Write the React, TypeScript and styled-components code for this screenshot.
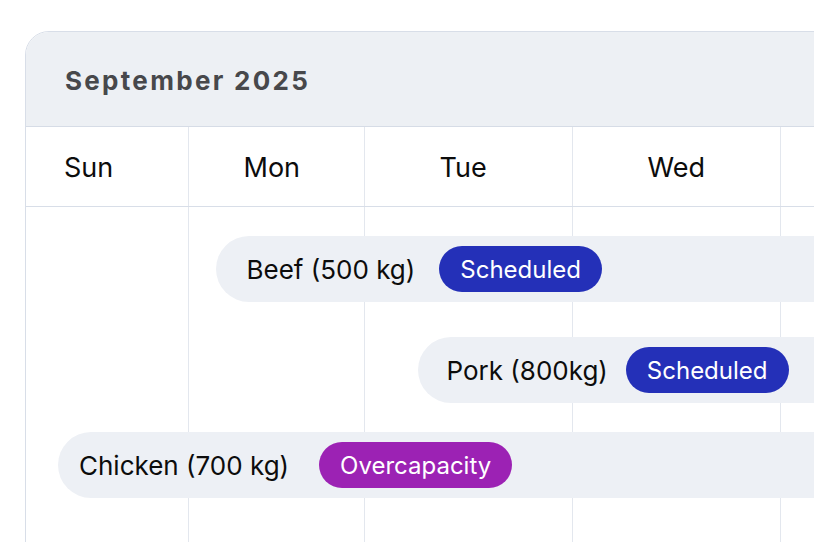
import React from "react";
import styled, { createGlobalStyle } from "styled-components";

const GlobalStyle = createGlobalStyle`
  html, body {
    margin: 0;
    padding: 0;
    background: #ffffff;
    overflow: hidden;
  }
  body {
    font-family: Inter, "Noto Sans", sans-serif;
    color: #111111;
  }
`;

const COLUMNS = "162.5px 176px 208px 208px 208px 208px 208px";

// left padding of each day name inside its column
const days = [
  { name: "Sun", pad: 38 },
  { name: "Mon", pad: 55 },
  { name: "Tue", pad: 75 },
  { name: "Wed", pad: 75 },
  { name: "Thu", pad: 75 },
  { name: "Fri", pad: 75 },
  { name: "Sat", pad: 75 },
];

type Status = "scheduled" | "overcapacity";

const events: {
  label: string;
  status: Status;
  col: number;
  offset: number;
  top: number;
  pad: number;
  gap: number;
}[] = [
  { label: "Beef (500 kg)", status: "scheduled", col: 2, offset: 27, top: 29, pad: 31, gap: 24 },
  { label: "Pork (800kg)", status: "scheduled", col: 3, offset: 53, top: 35, pad: 29, gap: 18 },
  { label: "Chicken (700 kg)", status: "overcapacity", col: 1, offset: 32, top: 29, pad: 21, gap: 30 },
];

export default function App() {
  return (
    <>
      <GlobalStyle />
      <Card>
        <MonthHeader>September 2025</MonthHeader>
        <DayRow>
          {days.map((d, i) => (
            <DayCell key={d.name} $pad={d.pad} $last={i === days.length - 1}>
              {d.name}
            </DayCell>
          ))}
        </DayRow>
        <Body>
          {days.map((d, i) => (
            <ColumnLine key={d.name} $col={i + 1} $last={i === days.length - 1} />
          ))}
          {events.map((e, i) => (
            <EventBar
              key={e.label}
              $col={e.col}
              $row={i + 1}
              $offset={e.offset}
              $top={e.top}
              $pad={e.pad}
              $gap={e.gap}
            >
              <EventLabel>{e.label}</EventLabel>
              <Badge $status={e.status}>
                {e.status === "scheduled" ? "Scheduled" : "Overcapacity"}
              </Badge>
            </EventBar>
          ))}
        </Body>
      </Card>
    </>
  );
}

const Card = styled.div`
  margin: 31px 0 0 25px;
  width: 1400px;
  height: 620px;
  display: flex;
  flex-direction: column;
  border: 1.5px solid #d8dee8;
  border-radius: 24px 24px 0 0;
  overflow: hidden;
  background: #ffffff;
`;

const MonthHeader = styled.div`
  flex: none;
  height: 95px;
  box-sizing: border-box;
  padding: 3px 0 0 39px;
  display: flex;
  align-items: center;
  background: #edf0f4;
  border-bottom: 1.5px solid #d6dce6;
  font-size: 26px;
  font-weight: 700;
  letter-spacing: 2.3px;
  color: #47484b;
`;

const DayRow = styled.div`
  flex: none;
  display: grid;
  grid-template-columns: ${COLUMNS};
  height: 79px;
  border-bottom: 1.5px solid #d8dee8;
`;

const DayCell = styled.div<{ $pad: number; $last: boolean }>`
  display: flex;
  align-items: center;
  padding: 2px 0 0 ${(p) => p.$pad}px;
  border-right: ${(p) => (p.$last ? "none" : "1.5px solid #e3e7ee")};
  font-size: 27px;
  color: #0c0c0c;
`;

const Body = styled.div`
  flex: 1;
  display: grid;
  grid-template-columns: ${COLUMNS};
  grid-template-rows: auto auto auto 1fr;
`;

const ColumnLine = styled.div<{ $col: number; $last: boolean }>`
  grid-column: ${(p) => p.$col};
  grid-row: 1 / -1;
  border-right: ${(p) => (p.$last ? "none" : "1.5px solid #e3e7ee")};
`;

const EventBar = styled.div<{
  $col: number;
  $row: number;
  $offset: number;
  $top: number;
  $pad: number;
  $gap: number;
}>`
  grid-column: ${(p) => p.$col} / -1;
  grid-row: ${(p) => p.$row};
  margin-left: ${(p) => p.$offset}px;
  margin-top: ${(p) => p.$top}px;
  z-index: 1;
  height: 66px;
  box-sizing: border-box;
  padding-left: ${(p) => p.$pad}px;
  display: flex;
  align-items: center;
  gap: ${(p) => p.$gap}px;
  background: #edf0f5;
  border-radius: 33px 0 0 33px;
`;

const EventLabel = styled.span`
  font-size: 26px;
  color: #0c0c0c;
  white-space: nowrap;
`;

const Badge = styled.span<{ $status: Status }>`
  height: 46px;
  box-sizing: border-box;
  padding: 0 21px;
  display: inline-flex;
  align-items: center;
  border-radius: 23px;
  background: ${(p) => (p.$status === "scheduled" ? "#2430b8" : "#9c22b4")};
  color: #ffffff;
  font-size: 24px;
  white-space: nowrap;
`;
